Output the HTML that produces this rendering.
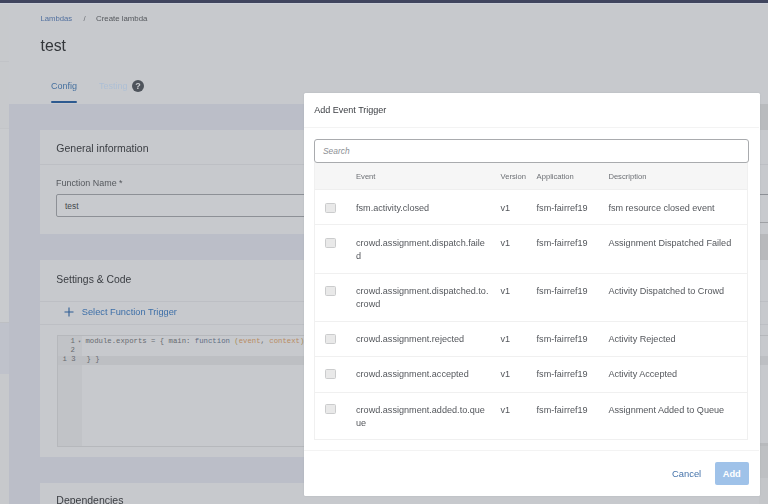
<!DOCTYPE html>
<html lang="en">
<head>
<meta charset="utf-8">
<title>Create lambda</title>
<style>
*{box-sizing:border-box;margin:0;padding:0}
html,body{width:768px;height:504px;overflow:hidden}
body{position:relative;background:#c7c9cd;font-family:"Liberation Sans",sans-serif;color:#3a3d42;filter:blur(0.35px)}
.abs{position:absolute}
.topbar{left:0;top:0;width:768px;height:2.6px;background:#40455e;box-shadow:0 1px 0 #cbcfd9;z-index:2}
.side{left:0;top:3px;width:8.5px;height:501px;background:#c7c9cc}
.side .ln{position:absolute;left:0;width:9px;height:1px;background:#c1c3c7}
.side .sel{position:absolute;left:0;top:319px;width:9px;height:52px;background:#bfc2cb;border-top:1px solid #bdbfc3}
.content{left:8.5px;top:104px;width:760px;height:400px;background:#bbbec8}
.crumb{top:14px;font-size:7.7px;line-height:10px;white-space:nowrap}
.title{left:40.5px;top:33.6px;font-size:15.8px;line-height:24px;color:#33363a}
.tab{top:80px;font-size:9px;line-height:12px;white-space:nowrap}
.card{left:40px;width:728px;background:#c7c9cd}
.card h3{position:absolute;left:16.3px;font-weight:normal;font-size:10.5px;line-height:14px;color:#3a3d42;white-space:nowrap}
.sep{position:absolute;left:0;width:100%;height:1px;background:#bdbfc4}
.lbl{position:absolute;left:16px;font-size:8.95px;line-height:12px;color:#55585d;white-space:nowrap}
.inp{position:absolute;left:16px;width:720px;height:23.6px;border:1px solid #8d9096;border-radius:2px;background:#c8cace;font-size:8.4px;line-height:22.6px;padding-left:8px;color:#44474c}
.code{position:absolute;left:17px;top:74.6px;width:720px;height:112.4px;background:#c7c9cd;border:1px solid #b6b8bc;font-family:"Liberation Mono",monospace;font-size:7.3px;line-height:9px;color:#686b70;white-space:pre}
.gut{position:absolute;left:0;top:0;width:24px;height:110.4px;background:#c1c3c7}
.act{position:absolute;left:0;top:20px;width:718px;height:9.5px;background:#bdbfc3}
.cl{position:absolute;left:0;height:9px;white-space:pre}
.or{color:#b98b62}.pa{color:#a38a58}.kw{color:#5d6c82}
.modal{left:304px;top:93px;width:455.5px;height:402.8px;background:#fff;border-radius:1.5px;box-shadow:0 0 2px rgba(60,65,80,.12)}
.modal .mt{position:absolute;left:10.3px;top:11.3px;font-size:9px;line-height:12px;color:#3a3d42;white-space:nowrap}
.msep{position:absolute;left:0;width:455px;height:1px;background:#f3f3f3}
.search{position:absolute;left:10px;top:46px;width:434.8px;height:24px;border:1px solid #a9abae;border-radius:3px;background:#fff;font-size:8.4px;line-height:22px;padding-left:8px;color:#8c8f94;font-style:italic}
.tbl{position:absolute;left:10px;top:69px;width:434px;height:277.8px;border:1px solid #f0f0f0;border-top:none}
.th{position:absolute;left:0;top:0;width:432px;height:28px;background:#f6f6f6;border-bottom:1px solid #efefef}
.th span{position:absolute;top:9.7px;font-size:7.62px;line-height:10px;color:#6d7075;white-space:nowrap}
.row{position:absolute;left:0;width:432px;border-bottom:1px solid #f0f0f0}
.row span{position:absolute;top:12px;font-size:9.1px;line-height:13.1px;color:#54575c;white-space:nowrap}
.cb{position:absolute;left:10px;top:12.6px;width:10.8px;height:10.2px;border:1px solid #cbcccd;border-radius:1.5px;background:#e9e9e9}
.c1{left:41px}.c2{left:185.5px}.c3{left:221.6px}.c4{left:293.4px}
.cancel{position:absolute;left:368px;top:374.8px;font-size:9.4px;line-height:12px;color:#4573aa;white-space:nowrap}
.add{position:absolute;left:411px;top:369px;width:33.5px;height:23px;border-radius:2px;background:#9fc2e9;color:#fff;font-weight:bold;font-size:9.3px;line-height:24.6px;text-align:center}
</style>
</head>
<body>
<div class="abs topbar"></div>
<div class="abs side"><div class="ln" style="top:58px"></div><div class="ln" style="top:125px;background:#c3c5c8"></div><div style="position:absolute;left:0;top:126px;width:9px;height:193px;background:#c9cbce"></div><div class="sel"></div></div>
<div class="abs crumb" style="left:40.5px;color:#52709f">Lambdas</div>
<div class="abs crumb" style="left:83.5px;color:#6b6e73">/</div>
<div class="abs crumb" style="left:96px;font-size:7.85px;color:#55585d">Create lambda</div>
<div class="abs title">test</div>
<div class="abs tab" style="left:51px;color:#45709f">Config</div>
<div class="abs" style="left:51px;top:100.8px;width:26px;height:2.4px;background:#2d5a90;border-radius:1px"></div>
<div class="abs tab" style="left:99px;color:#adbfd5">Testing</div>
<svg class="abs" style="left:131px;top:78.6px" width="14" height="14" viewBox="0 0 14 14"><circle cx="7" cy="7" r="6" fill="#4f545c"/><text x="7" y="10.2" text-anchor="middle" font-family="Liberation Sans, sans-serif" font-weight="bold" font-size="9" fill="#cdcfd2">?</text></svg>
<div class="abs content"></div>

<div class="abs card" style="top:130px;height:104px">
  <h3 style="top:10.8px">General information</h3>
  <div class="sep" style="top:34px"></div>
  <div class="lbl" style="top:46.6px">Function Name *</div>
  <div class="inp" style="top:63.7px">test</div>
</div>

<div class="abs card" style="top:260px;height:197px">
  <h3 style="top:12.5px;font-size:10.4px">Settings &amp; Code</h3>
  <div class="sep" style="top:40.6px"></div>
  <svg class="abs" style="left:24.4px;top:47.2px" width="10" height="10" viewBox="0 0 10 10"><path d="M5 0.5V9.5M0.5 5H9.5" stroke="#2d5c94" stroke-width="1.1" fill="none"/></svg>
  <div class="abs" style="left:41.8px;top:46.4px;font-size:9.25px;line-height:12px;color:#3d6fa8;white-space:nowrap">Select Function Trigger</div>
  <div class="sep" style="top:64px"></div>
  <div class="code">
    <div class="gut"></div>
    <div class="act"></div>
    <div class="cl" style="top:1.4px;left:12.6px">1<span style="font-size:5px"> ▾</span> module.exports = { main: <span class="kw">function</span> <span class="pa">(</span><span class="or">event</span>, <span class="or">context</span><span class="pa">)</span></div>
    <div class="cl" style="top:10.4px;left:12.6px">2</div>
    <div class="cl" style="top:19.6px;left:4.4px">i 3</div><div class="cl" style="top:19.6px;left:28.5px">} }</div>
  </div>
</div>

<div class="abs card" style="top:483px;height:30px">
  <h3 style="top:10px">Dependencies</h3>
</div>

<div class="abs" style="left:759px;top:214px;width:9px;height:6px;background:#c8cace"></div>
<div class="abs" style="left:759px;top:221.7px;width:9px;height:1.5px;background:#9fa1a5"></div>
<div class="abs" style="left:759px;top:104px;width:9px;height:26px;background:#b9bbbe"></div>
<div class="abs" style="left:759px;top:233.6px;width:9px;height:26.4px;background:#b8b9bc"></div>
<div class="abs" style="left:759px;top:443px;width:9px;height:3px;background:#b8babd"></div>
<div class="abs" style="left:759px;top:446px;width:9px;height:32px;background:#bec0c3"></div>
<div class="abs" style="left:759px;top:478px;width:9px;height:26px;background:#c4c6c9"></div>
<div class="abs modal">
  <div class="mt">Add Event Trigger</div>
  <div class="msep" style="top:34px"></div>
  <div class="tbl">
    <div class="th"><span class="c1">Event</span><span class="c2">Version</span><span class="c3">Application</span><span class="c4">Description</span></div>
    <div class="row" style="top:28px;height:35px"><i class="cb"></i><span class="c1">fsm.activity.closed</span><span class="c2">v1</span><span class="c3">fsm-fairref19</span><span class="c4">fsm resource closed event</span></div>
    <div class="row" style="top:63px;height:49px"><i class="cb"></i><span class="c1">crowd.assignment.dispatch.faile<br>d</span><span class="c2">v1</span><span class="c3">fsm-fairref19</span><span class="c4">Assignment Dispatched Failed</span></div>
    <div class="row" style="top:111px;height:49px"><i class="cb"></i><span class="c1">crowd.assignment.dispatched.to.<br>crowd</span><span class="c2">v1</span><span class="c3">fsm-fairref19</span><span class="c4">Activity Dispatched to Crowd</span></div>
    <div class="row" style="top:159px;height:36px"><i class="cb"></i><span class="c1">crowd.assignment.rejected</span><span class="c2">v1</span><span class="c3">fsm-fairref19</span><span class="c4">Activity Rejected</span></div>
    <div class="row" style="top:194px;height:36.5px"><i class="cb"></i><span class="c1">crowd.assignment.accepted</span><span class="c2">v1</span><span class="c3">fsm-fairref19</span><span class="c4">Activity Accepted</span></div>
    <div class="row" style="top:229.6px;height:47px;border-bottom:none"><i class="cb"></i><span class="c1">crowd.assignment.added.to.que<br>ue</span><span class="c2">v1</span><span class="c3">fsm-fairref19</span><span class="c4">Assignment Added to Queue</span></div>
  </div>
  <div class="search">Search</div>
  <div class="msep" style="top:357px"></div>
  <div class="cancel">Cancel</div>
  <div class="add">Add</div>
</div>
</body>
</html>
